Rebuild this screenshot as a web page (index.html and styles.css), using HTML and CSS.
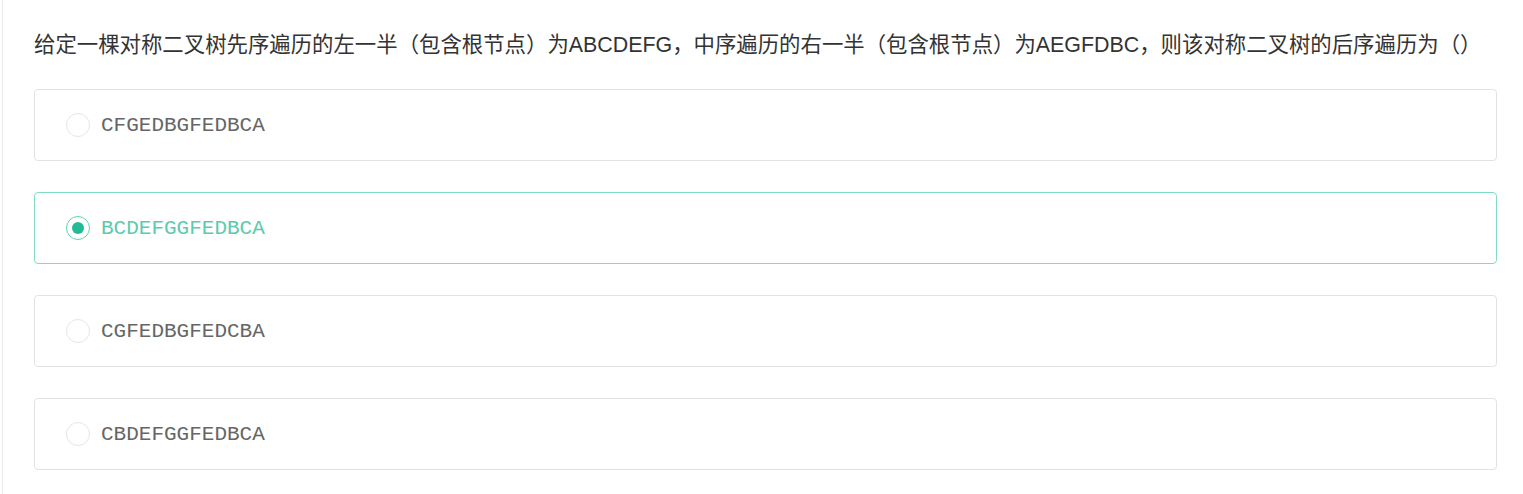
FILE: index.html
```html
<!DOCTYPE html>
<html lang="zh">
<head>
<meta charset="utf-8">
<link rel="stylesheet" href="styles.css">
</head>
<body>
<div class="page">
  <div class="question">给定一棵对称二叉树先序遍历的左一半（包含根节点）为ABCDEFG，中序遍历的右一半（包含根节点）为AEGFDBC，则该对称二叉树的后序遍历为（）</div>
  <div class="options">
    <div class="option"><span class="radio"></span><span class="label">CFGEDBGFEDBCA</span></div>
    <div class="option selected"><span class="radio"></span><span class="label">BCDEFGGFEDBCA</span></div>
    <div class="option"><span class="radio"></span><span class="label">CGFEDBGFEDCBA</span></div>
    <div class="option"><span class="radio"></span><span class="label">CBDEFGGFEDBCA</span></div>
  </div>
</div>
</body>
</html>
```
FILE: styles.css
```css
html, body {
  margin: 0;
  padding: 0;
  background: #fff;
}
.page {
  margin-left: 2px;
  border-left: 1px solid #ececec;
  min-height: 494px;
  box-sizing: border-box;
  padding: 29px 26px 0 31px;
}
.question {
  font-family: "Liberation Sans", "Noto Sans CJK SC", sans-serif;
  font-size: 21.4px;
  line-height: 32px;
  color: #333;
  white-space: nowrap;
}
.options {
  margin-top: 28px;
  display: flex;
  flex-direction: column;
  gap: 31px;
}
.option {
  height: 72px;
  box-sizing: border-box;
  border: 1px solid #e2e2e2;
  border-radius: 4px;
  display: flex;
  align-items: center;
  padding-left: 31px;
}
.radio {
  width: 24px;
  height: 24px;
  box-sizing: border-box;
  border: 1px solid #e6e6e6;
  border-radius: 50%;
  display: flex;
  align-items: center;
  justify-content: center;
  flex: none;
}
.label {
  margin-left: 11px;
  font-family: "Liberation Mono", "Courier New", monospace;
  font-size: 21px;
  color: #666;
}
.option.selected {
  border-color: #80dcc6;
}
.option.selected .radio {
  border-color: #62d0b5;
}
.option.selected .radio::after {
  content: "";
  width: 12px;
  height: 12px;
  border-radius: 50%;
  background: #22bb96;
}
.option.selected .label {
  color: #5ccaae;
}
```
